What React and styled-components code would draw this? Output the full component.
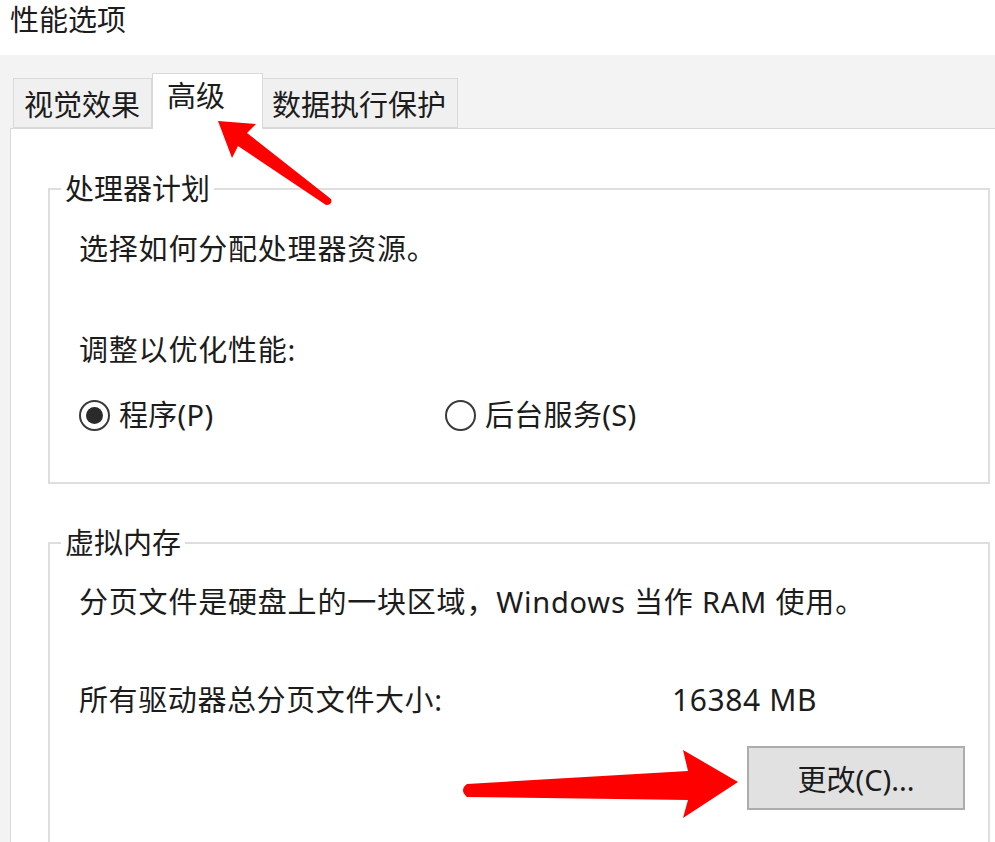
import React from "react";
import styled, { createGlobalStyle } from "styled-components";

const GlobalStyle = createGlobalStyle`
  body {
    margin: 0;
    background: #fff;
    font-family: "Noto Sans", "Noto Sans CJK SC", sans-serif;
    color: #1c1c1c;
    overflow: hidden;
  }
`;

const Window = styled.div`
  position: relative;
  width: 995px;
  height: 842px;
  overflow: hidden;
  background: #fff;
`;

const Title = styled.div`
  height: 55px;
  padding: 2px 0 0 10px;
  box-sizing: border-box;
  font-size: 29px;
  line-height: 36px;
`;

const Dialog = styled.div`
  background: #f3f3f3;
  padding-left: 10px;
  min-height: calc(842px - 55px);
  display: flex;
  flex-direction: column;
`;

const TabRow = styled.div`
  height: 73px;
  flex-shrink: 0;
  display: flex;
  align-items: flex-end;
  padding-left: 3px;
`;

const Tab = styled.div`
  box-sizing: border-box;
  width: ${(p) => p.$w}px;
  height: ${(p) => (p.$active ? 56 : 50)}px;
  padding-left: ${(p) => p.$pl}px;
  margin-bottom: ${(p) => (p.$active ? -1 : 0)}px;
  background: ${(p) => (p.$active ? "#fff" : "#f0f0f0")};
  border: 1px solid #d9d9d9;
  border-bottom: ${(p) => (p.$active ? "none" : "1px solid #d9d9d9")};
  border-left: ${(p) => (p.$first || p.$active ? "1px solid #d9d9d9" : "none")};
  position: relative;
  z-index: ${(p) => (p.$active ? 2 : 1)};
  font-size: 29px;
  line-height: ${(p) => (p.$active ? 44 : 52)}px;
  white-space: nowrap;
`;

const Panel = styled.div`
  flex: 1;
  background: #fff;
  border-top: 1px solid #d9d9d9;
  border-left: 1px solid #d9d9d9;
  padding: 43px 0 0 37px;
`;

const Group = styled.fieldset`
  margin: ${(p) => p.$top || 0}px 5px 0 0;
  padding: 0 0 ${(p) => p.$bottom}px 29px;
  border: 2px solid #dedede;
  min-width: 0;
`;

const Legend = styled.legend`
  margin-left: -18px;
  padding: 0 4px;
  font-size: 29px;
  line-height: 34px;
`;

const Line = styled.div`
  margin-top: ${(p) => p.$mt}px;
  font-size: 29px;
  line-height: 34px;
  letter-spacing: 0.8px;
  white-space: nowrap;
`;

const ValueRow = styled.div`
  margin-top: ${(p) => p.$mt}px;
  display: grid;
  grid-template-columns: 593px auto;
  align-items: center;
  font-size: 29px;
  line-height: 34px;
  letter-spacing: 0.6px;
  white-space: nowrap;
`;

const Value = styled.span`
  font-size: 30px;
  letter-spacing: 0.6px;
`;

const RadioRow = styled.div`
  margin-top: ${(p) => p.$mt}px;
  display: flex;
  align-items: center;
  height: 34px;
`;

const RadioOption = styled.label`
  display: flex;
  align-items: center;
  width: ${(p) => p.$w || "auto"};
  font-size: 29px;
  line-height: 34px;
  letter-spacing: 0.3px;
  white-space: nowrap;
`;

const RadioCircle = styled.span`
  box-sizing: border-box;
  width: 31px;
  height: 31px;
  border-radius: 50%;
  border: 2px solid #3a3a3a;
  margin-right: 9px;
  display: flex;
  align-items: center;
  justify-content: center;
  &::after {
    content: "";
    display: ${(p) => (p.$checked ? "block" : "none")};
    width: 17px;
    height: 17px;
    border-radius: 50%;
    background: #2a2a2a;
  }
`;

const ButtonRow = styled.div`
  margin-top: ${(p) => p.$mt}px;
  display: flex;
  justify-content: flex-end;
  padding-right: 23px;
`;

const Button = styled.button`
  box-sizing: border-box;
  width: 218px;
  height: 64px;
  background: #e1e1e1;
  border: 2px solid #adadad;
  border-radius: 0;
  font-family: "Noto Sans", "Noto Sans CJK SC", sans-serif;
  font-size: 29px;
  color: #1c1c1c;
  padding: 0;
`;

const Overlay = styled.svg`
  position: absolute;
  left: 0;
  top: 0;
  pointer-events: none;
  z-index: 10;
`;

const App = () => {
  return (
    <Window>
      <GlobalStyle />
      <Title>性能选项</Title>
      <Dialog>
        <TabRow>
          <Tab $w={139} $pl={10} $first>视觉效果</Tab>
          <Tab $w={111} $pl={14} $active>高级</Tab>
          <Tab $w={195} $pl={9}>数据执行保护</Tab>
        </TabRow>
        <Panel>
          <Group $bottom={50}>
            <Legend>处理器计划</Legend>
            <Line $mt={26}>选择如何分配处理器资源。</Line>
            <Line $mt={67}>调整以优化性能:</Line>
            <RadioRow $mt={31}>
              <RadioOption $w="366px">
                <RadioCircle $checked />
                程序(P)
              </RadioOption>
              <RadioOption>
                <RadioCircle />
                后台服务(S)
              </RadioOption>
            </RadioRow>
          </Group>
          <Group $top={42} $bottom={60}>
            <Legend>虚拟内存</Legend>
            <Line $mt={25}>分页文件是硬盘上的一块区域，Windows 当作 RAM 使用。</Line>
            <ValueRow $mt={64}>
              <span>所有驱动器总分页文件大小:</span>
              <Value>16384 MB</Value>
            </ValueRow>
            <ButtonRow $mt={29}>
              <Button>更改(C)...</Button>
            </ButtonRow>
          </Group>
        </Panel>
      </Dialog>

      <Overlay width="995" height="842" viewBox="0 0 995 842">
        <path
          d="M218 121 L256 124 L247 133 L331 199 Q333 205 326 205 L238 146 L232 158 Z"
          fill="#ff0000"
        />
        <path
          d="M738 782 L683 750 L688 771 L467 784 Q459 790 467 797 L688 800 L683 818 Z"
          fill="#ff0000"
        />
      </Overlay>
    </Window>
  );
};

export default App;
